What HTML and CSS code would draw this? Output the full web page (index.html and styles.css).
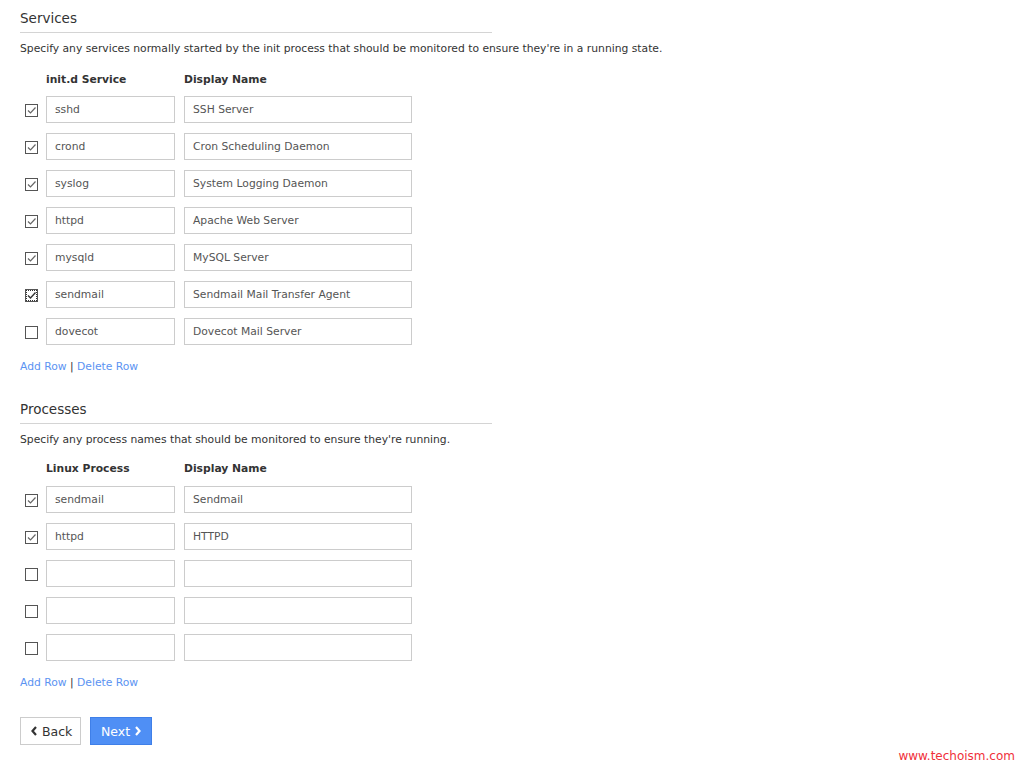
FILE: index.html
```html
<!DOCTYPE html>
<html>
<head>
<meta charset="utf-8">
<link rel="stylesheet" href="styles.css">
</head>
<body>
<div class="page">
  <section class="section first">
    <h2 class="title">Services</h2>
    <p class="desc">Specify any services normally started by the init process that should be monitored to ensure they're in a running state.</p>
    <div class="grid">
      <div class="head-row"><span></span><span class="col-h">init.d Service</span><span class="col-h">Display Name</span></div>
      <div class="row"><span class="cb on"><svg viewBox="0 0 13 13"><path d="M3 6.5 L5.5 9 L10.5 3.5" fill="none" stroke="#666" stroke-width="1.2"/></svg></span><div class="inp small">sshd</div><div class="inp wide">SSH Server</div></div>
      <div class="row"><span class="cb on"><svg viewBox="0 0 13 13"><path d="M3 6.5 L5.5 9 L10.5 3.5" fill="none" stroke="#666" stroke-width="1.2"/></svg></span><div class="inp small">crond</div><div class="inp wide">Cron Scheduling Daemon</div></div>
      <div class="row"><span class="cb on"><svg viewBox="0 0 13 13"><path d="M3 6.5 L5.5 9 L10.5 3.5" fill="none" stroke="#666" stroke-width="1.2"/></svg></span><div class="inp small">syslog</div><div class="inp wide">System Logging Daemon</div></div>
      <div class="row"><span class="cb on"><svg viewBox="0 0 13 13"><path d="M3 6.5 L5.5 9 L10.5 3.5" fill="none" stroke="#666" stroke-width="1.2"/></svg></span><div class="inp small">httpd</div><div class="inp wide">Apache Web Server</div></div>
      <div class="row"><span class="cb on"><svg viewBox="0 0 13 13"><path d="M3 6.5 L5.5 9 L10.5 3.5" fill="none" stroke="#666" stroke-width="1.2"/></svg></span><div class="inp small">mysqld</div><div class="inp wide">MySQL Server</div></div>
      <div class="row"><span class="cb on focus"><svg viewBox="0 0 13 13"><path d="M3 6.5 L5.5 9 L10.5 3.5" fill="none" stroke="#333" stroke-width="1.4"/></svg></span><div class="inp small">sendmail</div><div class="inp wide">Sendmail Mail Transfer Agent</div></div>
      <div class="row"><span class="cb"></span><div class="inp small">dovecot</div><div class="inp wide">Dovecot Mail Server</div></div>
    </div>
    <div class="links"><a class="link">Add Row</a> | <a class="link">Delete Row</a></div>
  </section>

  <section class="section second">
    <h2 class="title">Processes</h2>
    <p class="desc">Specify any process names that should be monitored to ensure they're running.</p>
    <div class="grid">
      <div class="head-row"><span></span><span class="col-h">Linux Process</span><span class="col-h">Display Name</span></div>
      <div class="row"><span class="cb on"><svg viewBox="0 0 13 13"><path d="M3 6.5 L5.5 9 L10.5 3.5" fill="none" stroke="#666" stroke-width="1.2"/></svg></span><div class="inp small">sendmail</div><div class="inp wide">Sendmail</div></div>
      <div class="row"><span class="cb on"><svg viewBox="0 0 13 13"><path d="M3 6.5 L5.5 9 L10.5 3.5" fill="none" stroke="#666" stroke-width="1.2"/></svg></span><div class="inp small">httpd</div><div class="inp wide">HTTPD</div></div>
      <div class="row"><span class="cb"></span><div class="inp small"></div><div class="inp wide"></div></div>
      <div class="row"><span class="cb"></span><div class="inp small"></div><div class="inp wide"></div></div>
      <div class="row"><span class="cb"></span><div class="inp small"></div><div class="inp wide"></div></div>
    </div>
    <div class="links"><a class="link">Add Row</a> | <a class="link">Delete Row</a></div>
  </section>

  <div class="buttons">
    <button class="btn back"><svg class="chev" viewBox="0 0 8 10"><path d="M6 1 L2.5 5 L6 9" fill="none" stroke="#333" stroke-width="2.2"/></svg>Back</button>
    <button class="btn next">Next<svg class="chev" viewBox="0 0 8 10"><path d="M2 1 L5.5 5 L2 9" fill="none" stroke="#fff" stroke-width="2.2"/></svg></button>
  </div>
</div>
<div class="watermark">www.techoism.com</div>
</body>
</html>
```

FILE: styles.css
```css
html, body {
  margin: 0;
  padding: 0;
  background: #fff;
}
body {
  font-family: "DejaVu Sans", Verdana, sans-serif;
  font-size: 10.75px;
  color: #333;
  height: 769px;
  position: relative;
  overflow: hidden;
}
.page {
  padding: 10px 20px 0 20px;
}
.title {
  margin: 0;
  width: 472px;
  font-weight: normal;
  font-size: 13.5px;
  color: #333;
  line-height: 17px;
  padding-bottom: 5px;
  border-bottom: 1px solid #d4d4d4;
}
.desc {
  margin: 9px 0 0 0;
  line-height: 14px;
  color: #333;
}
.grid {
  margin-top: 16px;
  display: flex;
  flex-direction: column;
  gap: 10px;
}
.first .grid {
  margin-top: 17px;
}
.second .grid {
  margin-top: 15px;
}
.second .head-row {
  margin-bottom: 1px;
}
.head-row {
  display: grid;
  grid-template-columns: 26px 138px 228px;
  font-weight: bold;
  line-height: 13px;
}
.row {
  display: grid;
  grid-template-columns: 26px 129px 228px;
  column-gap: 0;
  align-items: center;
}
.row .wide { margin-left: 9px; }
.cb {
  width: 11px;
  height: 11px;
  border: 1px solid #555;
  margin-left: 5px;
  margin-top: 2px;
  position: relative;
  background: #fff;
}
.cb svg {
  position: absolute;
  left: -1px;
  top: -1px;
  width: 13px;
  height: 13px;
}
.cb.focus {
  outline: 1px dotted #333;
  outline-offset: -2px;
}
.inp {
  height: 25px;
  border: 1px solid #ccc;
  padding: 0 8px;
  line-height: 25px;
  color: #555;
  white-space: nowrap;
  box-sizing: content-box;
}
.inp.small { width: 111px; }
.inp.wide { width: 210px; }
.links {
  margin-top: 15px;
  line-height: 14px;
  color: #333;
}
.link {
  color: #5b93f2;
}
.second {
  margin-top: 27px;
}
.buttons {
  margin-top: 27px;
  display: flex;
  gap: 9px;
}
.btn {
  height: 28px;
  font-family: "DejaVu Sans", Verdana, sans-serif;
  font-size: 12.5px;
  display: flex;
  align-items: center;
  gap: 4px;
  cursor: pointer;
}
.btn.back {
  background: #fff;
  color: #333;
  border: 1px solid #ccc;
  width: 61px;
  padding: 0 0 0 9px;
}
.btn.next {
  background: #4f8ff5;
  color: #fff;
  border: 1px solid #3f7fe8;
  width: 62px;
  padding: 0 0 0 10px;
}
.chev {
  width: 8px;
  height: 10px;
}
.watermark {
  position: absolute;
  right: 9px;
  bottom: 6px;
  color: #f0303a;
  font-family: "DejaVu Sans", Verdana, sans-serif;
  font-size: 12px;
}
```
